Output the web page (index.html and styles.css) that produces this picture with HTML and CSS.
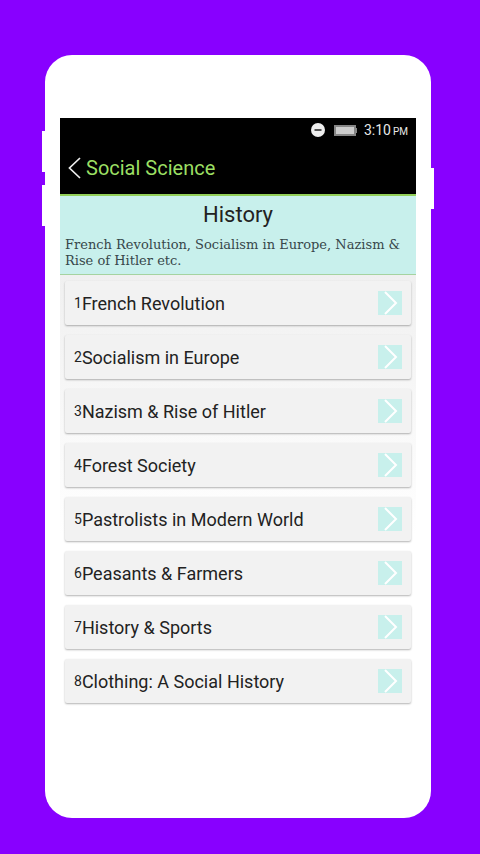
FILE: index.html
```html
<!DOCTYPE html>
<html lang="en">
<head>
<meta charset="utf-8">
<meta name="viewport" content="width=device-width, initial-scale=1">
<title>Social Science</title>
<link rel="stylesheet" href="styles.css">
</head>
<body>
<div class="phone">
  <span class="key key-up"></span>
  <span class="key key-down"></span>
  <span class="key key-power"></span>
  <div class="screen">
    <header class="top">
      <div class="status">
        <svg class="dnd" viewBox="0 0 14 14" aria-hidden="true"><circle cx="7" cy="7" r="7" fill="#eee"/><path d="M3.5 7h7" stroke="#111" stroke-width="1.4"/></svg>
        <svg class="battery" viewBox="0 0 23 11" aria-hidden="true"><path d="M0 0h22v3h1v5h-1v3H0z" fill="#858585"/><path d="M2 2h18v7H2z" fill="#ccc"/></svg>
        <span class="clock">3:10</span><span class="meridiem">PM</span>
      </div>
      <div class="bar">
        <button class="back" type="button" aria-label="Back"><svg viewBox="0 0 13 22" aria-hidden="true"><path d="M12 1L1.5 11L12 21" fill="none" stroke="#eee" stroke-width="1.7"/></svg></button>
        <h1>Social Science</h1>
      </div>
    </header>
    <section class="intro">
      <h2>History</h2>
      <p>French Revolution, Socialism in Europe, Nazism &amp; Rise of Hitler etc.</p>
    </section>
    <nav class="chapters">
      <a class="card" href="#1"><span class="num">1</span><span class="name">French Revolution</span><svg class="go" viewBox="0 0 24 24" aria-hidden="true"><path d="M7 1l11 11L7 23"/></svg></a>
      <a class="card" href="#2"><span class="num">2</span><span class="name">Socialism in Europe</span><svg class="go" viewBox="0 0 24 24" aria-hidden="true"><path d="M7 1l11 11L7 23"/></svg></a>
      <a class="card" href="#3"><span class="num">3</span><span class="name">Nazism &amp; Rise of Hitler</span><svg class="go" viewBox="0 0 24 24" aria-hidden="true"><path d="M7 1l11 11L7 23"/></svg></a>
      <a class="card" href="#4"><span class="num">4</span><span class="name">Forest Society</span><svg class="go" viewBox="0 0 24 24" aria-hidden="true"><path d="M7 1l11 11L7 23"/></svg></a>
      <a class="card" href="#5"><span class="num">5</span><span class="name">Pastrolists in Modern World</span><svg class="go" viewBox="0 0 24 24" aria-hidden="true"><path d="M7 1l11 11L7 23"/></svg></a>
      <a class="card" href="#6"><span class="num">6</span><span class="name">Peasants &amp; Farmers</span><svg class="go" viewBox="0 0 24 24" aria-hidden="true"><path d="M7 1l11 11L7 23"/></svg></a>
      <a class="card" href="#7"><span class="num">7</span><span class="name">History &amp; Sports</span><svg class="go" viewBox="0 0 24 24" aria-hidden="true"><path d="M7 1l11 11L7 23"/></svg></a>
      <a class="card" href="#8"><span class="num">8</span><span class="name">Clothing: A Social History</span><svg class="go" viewBox="0 0 24 24" aria-hidden="true"><path d="M7 1l11 11L7 23"/></svg></a>
    </nav>
  </div>
</div>
</body>
</html>
```
FILE: styles.css
```css
* {
  box-sizing: border-box;
}

body {
  display: flex;
  min-height: 100vh;
  margin: 0;
  padding: 55px 49px 36px 45px;
  background: #8800ff;
  font-family: Roboto, "Liberation Sans", sans-serif;
  color: #222;
}

.phone {
  position: relative;
  flex: 1;
  padding: 63px 15px;
  border-radius: 27px;
  background: #fff;
}

/* Hardware keys on the phone's edges */
.key {
  position: absolute;
  width: 4px;
  height: 41px;
  background: #fff;
}

.key-up {
  top: 76px;
  left: -3px;
}

.key-down {
  top: 130px;
  left: -3px;
}

.key-power {
  top: 113px;
  right: -3px;
}

.top {
  border-bottom: 2px solid #92cf58;
  background: #000;
}

.status {
  display: flex;
  align-items: center;
  justify-content: flex-end;
  height: 24px;
  padding-right: 8px;
  color: #e8e8e8;
}

.dnd {
  width: 14px;
  height: 14px;
}

.battery {
  width: 23px;
  height: 11px;
  margin: 0 7px 0 9px;
}

.clock {
  font-size: 14px;
}

.meridiem {
  margin: 3px 0 0 2px;
  font-size: 10px;
}

.bar {
  display: flex;
  align-items: center;
  height: 52px;
  padding-left: 8px;
}

.back {
  width: 18px;
  height: 22px;
  padding: 0;
  border: 0;
  background: none;
}

.back svg {
  display: block;
  width: 13px;
  height: 22px;
}

h1 {
  margin: 0;
  color: #9bdf63;
  font-size: 20px;
  font-weight: 400;
}

.intro {
  padding: 6px 5px 5px;
  border-bottom: 1px solid #a5d3a0;
  background: #c8f0ec;
}

h2 {
  margin: 0 0 9px;
  font-size: 22px;
  font-weight: 400;
  line-height: 26px;
  text-align: center;
}

.intro p {
  margin: 0;
  color: #37474a;
  font-family: "DejaVu Serif", serif;
  font-size: 13px;
  line-height: 16px;
}

.chapters {
  display: grid;
  gap: 10px;
  padding: 6px 5px;
  background: linear-gradient(#f0f0f0, #fff 60%);
}

.card {
  display: flex;
  align-items: center;
  height: 44px;
  padding: 0 9px;
  border-radius: 2px;
  background: #f2f2f2;
  box-shadow: 0 1px 2px rgba(0, 0, 0, 0.3);
  color: #222;
  text-decoration: none;
}

.num {
  font-size: 14px;
}

.name {
  flex: 1;
  font-size: 18px;
}

.go {
  width: 24px;
  height: 24px;
  background: #c8f0ec;
}

.go path {
  fill: none;
  stroke: #fff;
  stroke-width: 2;
}
```
